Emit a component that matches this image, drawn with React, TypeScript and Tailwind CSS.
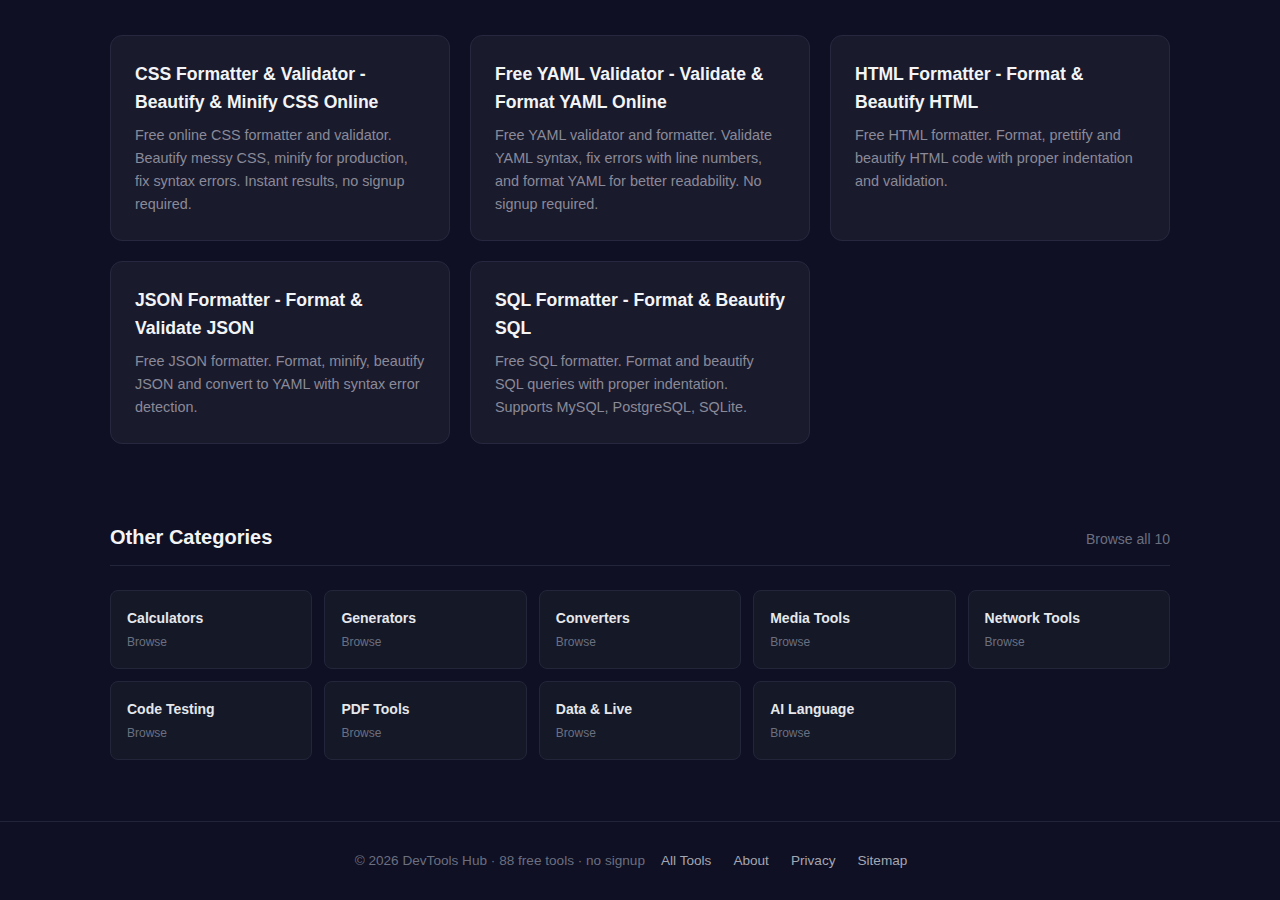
const tools = [
  {
    title: "CSS Formatter & Validator - Beautify & Minify CSS Online",
    desc: "Free online CSS formatter and validator. Beautify messy CSS, minify for production, fix syntax errors. Instant results, no signup required.",
  },
  {
    title: "Free YAML Validator - Validate & Format YAML Online",
    desc: "Free YAML validator and formatter. Validate YAML syntax, fix errors with line numbers, and format YAML for better readability. No signup required.",
  },
  {
    title: "HTML Formatter - Format & Beautify HTML",
    desc: "Free HTML formatter. Format, prettify and beautify HTML code with proper indentation and validation.",
  },
  {
    title: "JSON Formatter - Format & Validate JSON",
    desc: "Free JSON formatter. Format, minify, beautify JSON and convert to YAML with syntax error detection.",
  },
  {
    title: "SQL Formatter - Format & Beautify SQL",
    desc: "Free SQL formatter. Format and beautify SQL queries with proper indentation. Supports MySQL, PostgreSQL, SQLite.",
  },
];

const categories = [
  "Calculators",
  "Generators",
  "Converters",
  "Media Tools",
  "Network Tools",
  "Code Testing",
  "PDF Tools",
  "Data & Live",
  "AI Language",
];

export default function App() {
  return (
    <div className="min-h-[900px] bg-[#0f1023] [font-family:'Liberation_Sans',Arial,sans-serif]">
      <main className="mx-auto w-[1060px] pt-[35px]">
        {/* tool cards */}
        <div className="grid grid-cols-3 gap-5">
          {tools.map((t) => (
            <a
              key={t.title}
              href="#"
              className="block rounded-xl border border-[#27283f] bg-[#1a1a2d] p-6"
            >
              <h3 className="text-[17.6px] leading-7 font-bold text-[#f3f4f6]">{t.title}</h3>
              <p className="mt-2 text-[14.4px] leading-[23px] text-[#8a8a98]">{t.desc}</p>
            </a>
          ))}
        </div>

        {/* other categories */}
        <section className="mt-[79px]">
          <div className="flex items-center justify-between border-b border-[#23253a] pb-[14px]">
            <h2 className="text-xl leading-7 font-bold text-[#f3f4f6]">Other Categories</h2>
            <a href="#" className="mt-1 text-sm text-[#6b6f80]">
              Browse all 10
            </a>
          </div>
          <div className="mt-6 grid grid-cols-5 gap-3">
            {categories.map((c) => (
              <a
                key={c}
                href="#"
                className="block h-[79px] rounded-lg border border-[#23263a] bg-[#141827] px-4 pt-[17px]"
              >
                <div className="text-sm leading-5 font-bold text-[#e5e7eb]">{c}</div>
                <div className="mt-[6px] text-xs leading-4 text-[#6b7080]">Browse</div>
              </a>
            ))}
          </div>
        </section>
      </main>

      <footer className="mt-[61px] border-t border-[#22243a] pt-[29px] pb-[30px]">
        <div className="flex items-center justify-center pr-[18px] text-[13.6px] leading-5">
          <span className="text-[#6b6f80]">© 2026 DevTools Hub · 88 free tools · no signup</span>
          <nav className="ml-4 flex gap-[22px] text-[#a3a7b3]">
            <a href="#">All Tools</a>
            <a href="#">About</a>
            <a href="#">Privacy</a>
            <a href="#">Sitemap</a>
          </nav>
        </div>
      </footer>
    </div>
  );
}
